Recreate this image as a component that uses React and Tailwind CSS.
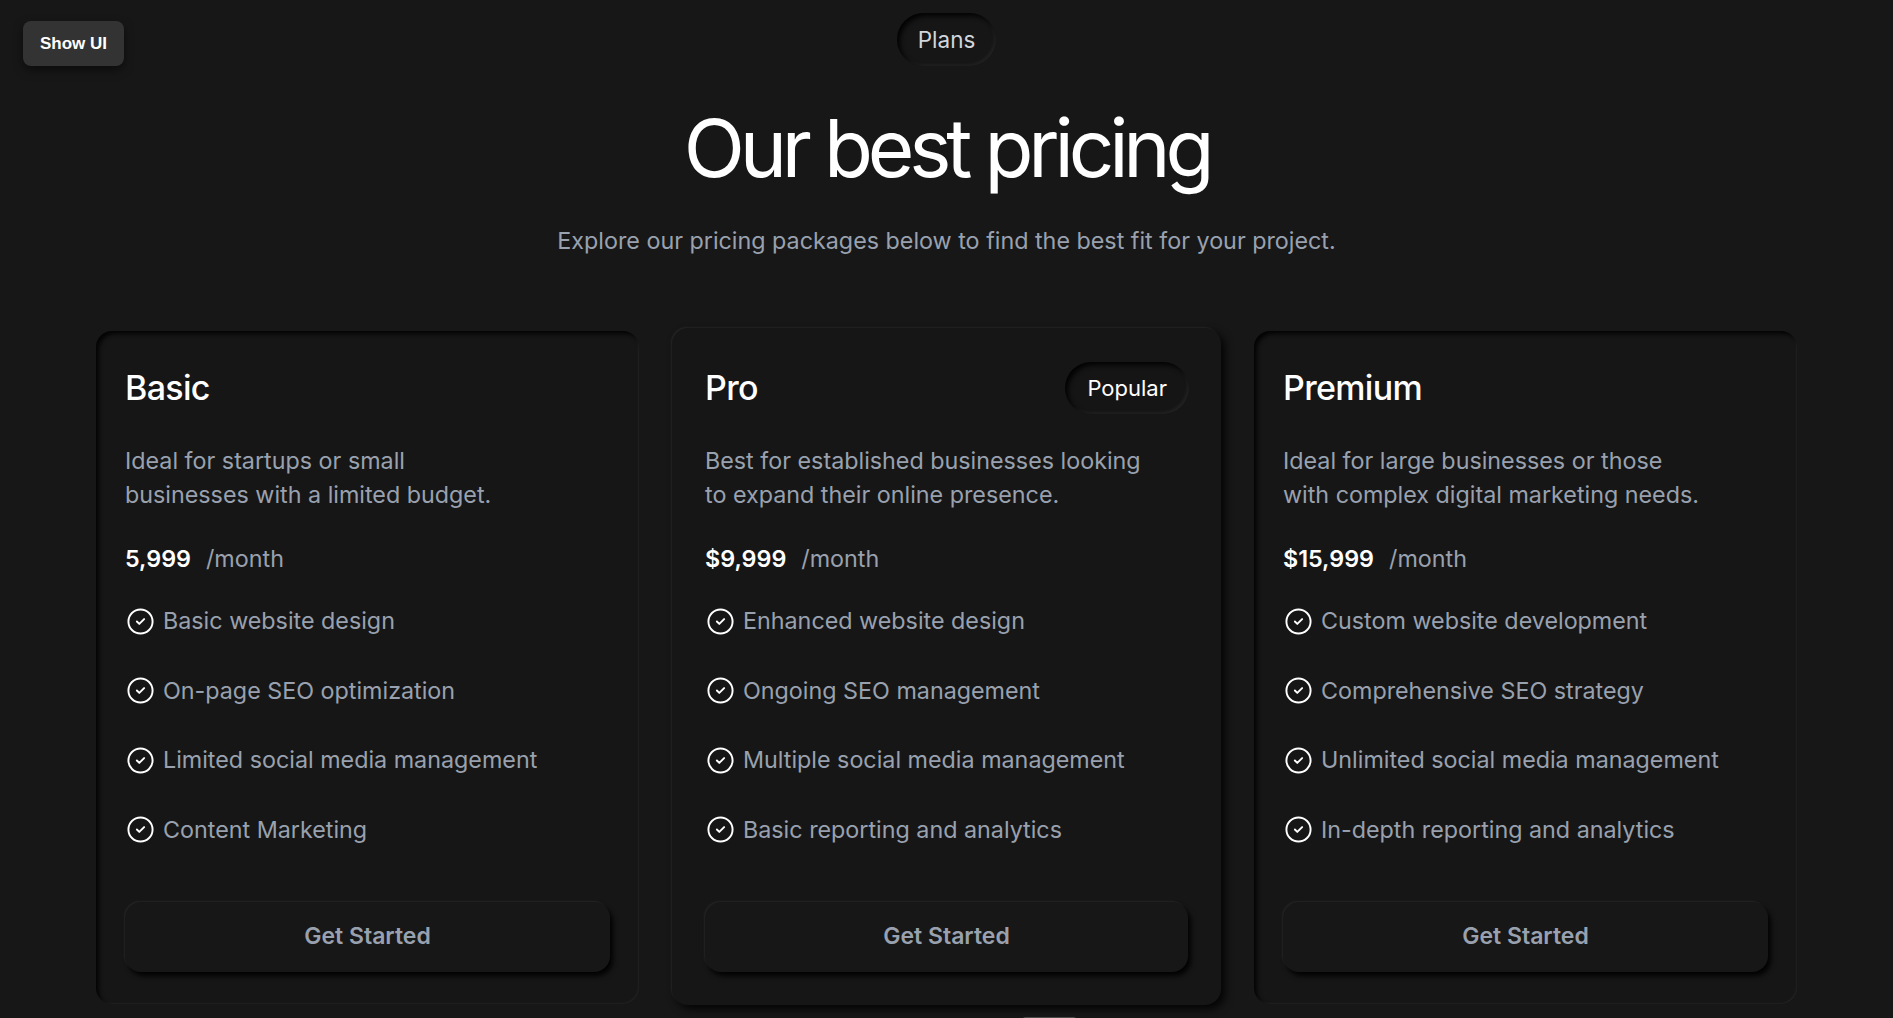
import { CircleCheck } from "lucide-react";

const PLANS = [
  {
    name: "Basic",
    desc: ["Ideal for startups or small", "businesses with a limited budget."],
    price: "5,999",
    features: [
      "Basic website design",
      "On-page SEO optimization",
      "Limited social media management",
      "Content Marketing",
    ],
  },
  {
    name: "Pro",
    popular: true,
    desc: ["Best for established businesses looking", "to expand their online presence."],
    price: "$9,999",
    features: [
      "Enhanced website design",
      "Ongoing SEO management",
      "Multiple social media management",
      "Basic reporting and analytics",
    ],
  },
  {
    name: "Premium",
    desc: ["Ideal for large businesses or those", "with complex digital marketing needs."],
    price: "$15,999",
    features: [
      "Custom website development",
      "Comprehensive SEO strategy",
      "Unlimited social media management",
      "In-depth reporting and analytics",
    ],
  },
];

function PlanCard({ plan }) {
  const raised = plan.popular;
  return (
    <div
      className={
        raised
          ? "-mx-[3px] -mt-[3px] -mb-[1px] rounded-2xl bg-[#161616] px-[33px] pt-[34px] pb-[33px] shadow-[-1px_-1px_2px_rgba(255,255,255,0.07),4px_4px_8px_rgba(0,0,0,0.85)]"
          : "rounded-2xl bg-[#161616] px-[29px] pt-[31px] pb-[32px] shadow-[inset_3px_3px_4px_rgba(0,0,0,0.85),inset_-1px_-1px_2px_rgba(255,255,255,0.06)]"
      }
    >
      <div className="flex h-[52px] items-center justify-between">
        <h3 className="text-[34px] leading-[40px] font-medium tracking-[-0.02em] text-white">
          {plan.name}
        </h3>
        {plan.popular && (
          <span className="-mr-[1px] flex h-[52px] items-center rounded-full bg-[#151515] px-[22px] text-[22px] text-white shadow-[inset_3px_3px_5px_rgba(0,0,0,0.9),inset_-2px_-2px_3px_rgba(255,255,255,0.06)]">
            Popular
          </span>
        )}
      </div>

      <p className="mt-[30px] text-[23.3px] leading-[34px] text-gray-400">
        {plan.desc[0]}
        <br />
        {plan.desc[1]}
      </p>

      <div className="mt-[31px] flex items-baseline gap-[15px] text-[23.3px] leading-[32px]">
        <span className="font-semibold text-white">{plan.price}</span>
        <span className="text-gray-400">/month</span>
      </div>

      <ul className="mt-[30px] flex flex-col gap-[37.5px]">
        {plan.features.map((f) => (
          <li
            key={f}
            className="flex items-center gap-[8px] text-[23.3px] leading-[32px] text-gray-400"
          >
            <CircleCheck size={29} strokeWidth={1.6} className="ml-[1px] shrink-0 text-white" />
            {f}
          </li>
        ))}
      </ul>

      <button
        type="button"
        className="mt-[56px] flex h-[70px] w-full items-center justify-center rounded-2xl bg-[#171717] text-[23px] font-semibold text-gray-400 shadow-[-1px_-1px_2px_rgba(255,255,255,0.07),3px_4px_5px_rgba(0,0,0,0.9)]"
      >
        Get Started
      </button>
    </div>
  );
}

export default function App() {
  return (
    <div className="relative min-h-screen overflow-hidden bg-[#171717] font-[Inter,sans-serif]">
      <button
        type="button"
        className="absolute top-[21px] left-[23px] flex h-[45px] w-[101px] items-center justify-center rounded-lg bg-[#333333] font-['Liberation_Sans',Arial,sans-serif] text-[17px] font-bold text-white shadow-[0_4px_10px_rgba(0,0,0,0.5)]"
      >
        Show UI
      </button>

      <div className="flex flex-col items-center pt-[13px]">
        <span className="flex h-[53px] items-center rounded-full bg-[#161616] px-[21px] text-[22.5px] text-gray-300 shadow-[inset_3px_3px_5px_rgba(0,0,0,0.9),inset_-2px_-2px_3px_rgba(255,255,255,0.05)]">
          Plans
        </span>
        <h1 className="mt-[42px] text-[80px] leading-[80px] font-normal tracking-[-0.065em] text-white">
          Our best pricing
        </h1>
        <p className="mt-[37px] text-[23.3px] leading-[32px] text-gray-400">
          Explore our pricing packages below to find the best fit for your project.
        </p>
      </div>

      <div className="mt-[74px] grid grid-cols-3 gap-9 px-24">
        {PLANS.map((p) => (
          <PlanCard key={p.name} plan={p} />
        ))}
      </div>

      <div className="flex justify-center">
        <div className="mt-[13px] ml-[206px] h-1 w-[55px] rounded-t bg-[#4a4a4a]" />
      </div>
    </div>
  );
}
